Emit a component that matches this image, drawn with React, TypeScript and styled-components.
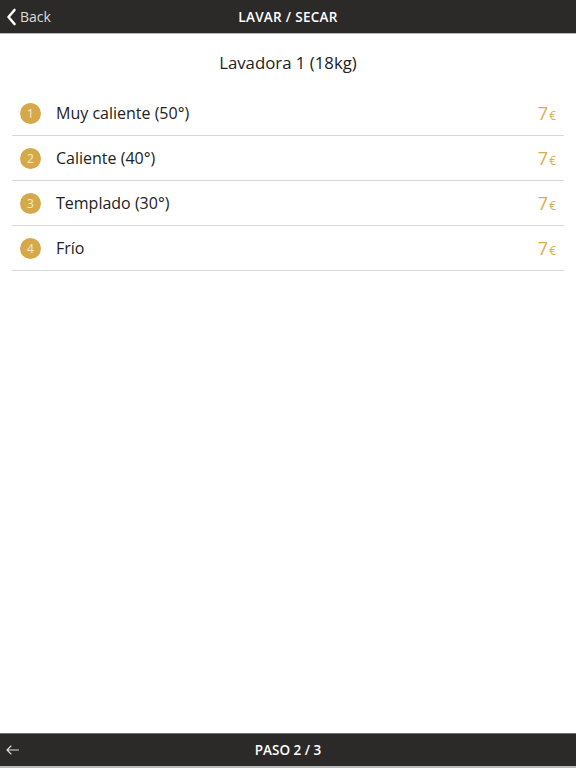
import React from "react";
import styled, { createGlobalStyle } from "styled-components";

const Global = createGlobalStyle`
  html, body { margin: 0; padding: 0; background: #ffffff; }
  body { font-family: "Open Sans", "Noto Sans", sans-serif; }
  * { box-sizing: border-box; }
`;

const Page = styled.div`
  width: 576px;
  height: 768px;
  display: flex;
  flex-direction: column;
  background: #ffffff;
`;

const TopBar = styled.header`
  height: 34px;
  flex: none;
  background: #2b2a28;
  border-bottom: 1px solid #b9b9b9;
  display: grid;
  grid-template-columns: 1fr auto 1fr;
  align-items: center;
`;

const BackButton = styled.button`
  justify-self: start;
  display: flex;
  align-items: center;
  gap: 3px;
  background: none;
  border: none;
  padding: 0 0 0 6px;
  color: #dcdcdc;
  font-family: inherit;
  font-size: 14px;
  cursor: pointer;
`;

const BarTitle = styled.div<{ $spacing?: number }>`
  color: #ffffff;
  font-size: 13.5px;
  font-weight: 600;
  letter-spacing: ${(p) => p.$spacing ?? 0}px;
`;

const Content = styled.main`
  flex: 1;
  display: flex;
  flex-direction: column;
  padding: 0 12px;
`;

const Heading = styled.h1`
  margin: 0;
  height: 57px;
  display: flex;
  align-items: center;
  justify-content: center;
  font-size: 16.8px;
  font-weight: 400;
  color: #222222;
`;

const List = styled.ul`
  list-style: none;
  margin: 0;
  padding: 0;
`;

const Row = styled.li`
  height: 45px;
  display: flex;
  align-items: center;
  padding: 0 8px;
  border-bottom: 1px solid #d8d8d8;
`;

const Badge = styled.span`
  width: 21px;
  height: 21px;
  border-radius: 50%;
  background: #d5a94a;
  color: #f6ecd6;
  font-size: 12px;
  display: flex;
  align-items: center;
  justify-content: center;
  flex: none;
`;

const Label = styled.span`
  margin-left: 15px;
  flex: 1;
  font-size: 16px;
  color: #222222;
`;

const Price = styled.span`
  color: #d8ad52;
  font-size: 18px;
  font-weight: 400;
  display: flex;
  align-items: baseline;
`;

const Currency = styled.span`
  font-size: 12px;
  margin-left: 1px;
`;

const BottomBar = styled.footer`
  height: 35px;
  flex: none;
  background: #2b2a28;
  border-top: 1px solid #6e6e6c;
  border-bottom: 2px solid #b9b9b9;
  display: grid;
  grid-template-columns: 1fr auto 1fr;
  align-items: center;
`;

const ArrowButton = styled.button`
  justify-self: start;
  background: none;
  border: none;
  padding: 0 0 0 6px;
  display: flex;
  align-items: center;
  cursor: pointer;
`;

const items = [
  { n: 1, label: "Muy caliente (50°)" },
  { n: 2, label: "Caliente (40°)" },
  { n: 3, label: "Templado (30°)" },
  { n: 4, label: "Frío" },
];

export default function App() {
  return (
    <Page>
      <Global />
      <TopBar>
        <BackButton>
          <svg width="11" height="18" viewBox="0 0 11 18" fill="none">
            <path d="M8.5 2 L2.5 9 L8.5 16" stroke="#ffffff" strokeWidth="2.6" strokeLinecap="round" strokeLinejoin="round" />
          </svg>
          Back
        </BackButton>
        <BarTitle $spacing={0.3}>LAVAR / SECAR</BarTitle>
        <span />
      </TopBar>
      <Content>
        <Heading>Lavadora 1 (18kg)</Heading>
        <List>
          {items.map((it) => (
            <Row key={it.n}>
              <Badge>{it.n}</Badge>
              <Label>{it.label}</Label>
              <Price>
                7<Currency>€</Currency>
              </Price>
            </Row>
          ))}
        </List>
      </Content>
      <BottomBar>
        <ArrowButton>
          <svg width="13" height="10" viewBox="0 0 13 10" fill="none">
            <path d="M12.5 5 H1 M5 1 L1 5 L5 9" stroke="#dcdcdc" strokeWidth="1.1" strokeLinecap="round" strokeLinejoin="round" />
          </svg>
        </ArrowButton>
        <BarTitle>PASO 2 / 3</BarTitle>
        <span />
      </BottomBar>
    </Page>
  );
}
